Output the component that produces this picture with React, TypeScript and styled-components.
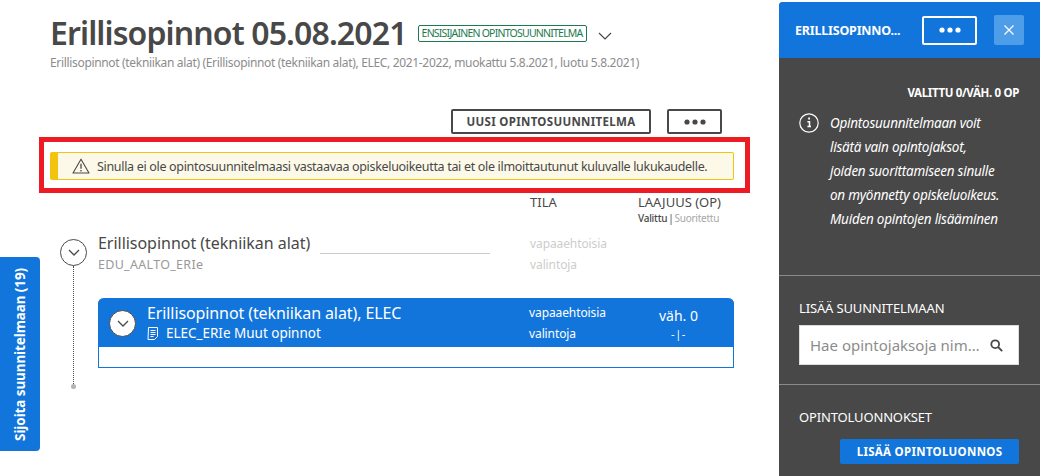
import React from 'react';
import styled, { createGlobalStyle } from 'styled-components';

const Global = createGlobalStyle`
  html, body { margin: 0; padding: 0; background: #fff; }
  body { font-family: "Noto Sans", "Open Sans", sans-serif; color: #484848; }
  * { box-sizing: border-box; }
`;

const Page = styled.div`
  position: relative;
  display: flex;
  width: 1040px;
  height: 476px;
  overflow: hidden;
  background: #fff;
`;

const Main = styled.main`
  width: 779px;
  flex: none;
  display: flex;
  flex-direction: column;
`;

const TitleRow = styled.div`
  display: flex;
  align-items: center;
  height: 36px;
  margin: 15px 0 0 50px;
`;

const Title = styled.h1`
  margin: 0;
  font-size: 32px;
  line-height: 36px;
  font-weight: 600;
  letter-spacing: -0.88px;
  color: #484848;
`;

const Badge = styled.span`
  margin-left: 11px;
  height: 17px;
  padding: 0 3px;
  border: 1px solid #1d7a50;
  border-radius: 2px;
  font-size: 10.5px;
  line-height: 15px;
  letter-spacing: -0.77px;
  color: #1d7a50;
  white-space: nowrap;
`;

const Caret = styled.svg`
  margin: 5px 0 0 11px;
  width: 14px;
  height: 8px;
  stroke: #484848;
  fill: none;
  stroke-width: 1.2;
`;

const Meta = styled.p`
  margin: 3px 0 0 50px;
  height: 17px;
  font-size: 12px;
  line-height: 17px;
  letter-spacing: -0.33px;
  color: #8c8c8c;
  white-space: nowrap;
`;

const Actions = styled.div`
  display: flex;
  justify-content: flex-end;
  gap: 16px;
  margin-top: 38px;
  padding-right: 57px;
`;

const OutlineButton = styled.button<{ $wide?: boolean }>`
  display: flex;
  align-items: center;
  justify-content: center;
  width: ${p => (p.$wide ? '200px' : '55px')};
  height: 25px;
  padding: 0;
  background: #fff;
  border: 2px solid #484848;
  border-radius: 2px;
  font-family: inherit;
  font-size: 11.5px;
  font-weight: 700;
  letter-spacing: 0.32px;
  color: #484848;
`;

const Dots = styled.svg<{ $light?: boolean }>`
  width: 22px;
  height: 6px;
  fill: ${p => (p.$light ? '#fff' : '#484848')};
`;

const Highlight = styled.div`
  margin: 3px 29px 0 39px;
  height: 56px;
  border: 5px solid #ed1c24;
  padding: 10px 11px 0 6px;
`;

const Alert = styled.div`
  display: flex;
  align-items: center;
  height: 28px;
  background: #fdf9e9;
  border: 1px solid #f2c40f;
  border-left-width: 8px;
  border-radius: 2px;
  padding-left: 14px;
  font-size: 12.5px;
  letter-spacing: -0.32px;
  color: #484848;
  white-space: nowrap;
`;

const AlertIcon = styled.svg`
  width: 18px;
  height: 16px;
  margin-right: 7px;
  flex: none;
  stroke: #484848;
  fill: none;
`;

const ColumnHeads = styled.div`
  display: grid;
  grid-template-columns: 108px 90px;
  margin: 0 0 0 530px;
  height: 38px;
`;

const HeadLabel = styled.div`
  font-size: 13px;
  line-height: 18px;
  color: #484848;
  white-space: nowrap;
`;

const HeadSub = styled.div`
  font-size: 10px;
  line-height: 14px;
  letter-spacing: -0.25px;
  color: #a6a6a6;
  white-space: nowrap;
  b { font-weight: 500; color: #484848; }
  i { font-style: normal; color: #484848; margin: 0 1px; }
`;

const Tree = styled.div`
  display: flex;
  margin: 8px 0 0 60px;
`;

const Rail = styled.div`
  width: 27px;
  flex: none;
  display: flex;
  flex-direction: column;
  align-items: center;
`;

const Toggle = styled.div`
  width: 27px;
  height: 27px;
  flex: none;
  display: flex;
  align-items: center;
  justify-content: center;
  border-radius: 50%;
  background: #fff;
  border: 1px solid #484848;
`;

const ToggleIcon = styled.svg`
  width: 12px;
  height: 7px;
  stroke: #484848;
  stroke-width: 1.3;
  fill: none;
`;

const Dotted = styled.div`
  width: 0;
  height: 118px;
  border-left: 1px dotted #484848;
`;

const EndDot = styled.div`
  width: 5px;
  height: 5px;
  border-radius: 50%;
  background: #b3b3b3;
`;

const TreeBody = styled.div`
  margin: -6px 0 0 11px;
  width: 636px;
`;

const RootRow = styled.div`
  display: grid;
  grid-template-columns: 432px 1fr;
  height: 65px;
`;

const RootName = styled.div`
  display: flex;
  align-items: flex-end;
  height: 15px;
  margin-top: 3px;
  font-size: 16px;
  line-height: 15px;
  letter-spacing: -0.03px;
  color: #484848;
  white-space: nowrap;
`;

const Rule = styled.span`
  width: 170px;
  height: 1px;
  margin-left: 10px;
  background: #ccc;
  transform: translateY(3px);
`;

const RootCode = styled.div`
  margin-top: 6px;
  font-size: 12.5px;
  letter-spacing: 0.3px;
  line-height: 16px;
  color: #999;
  white-space: nowrap;
`;

const StateText = styled.div<{ $light?: boolean }>`
  font-size: 12px;
  line-height: 21px;
  letter-spacing: -0.1px;
  color: ${p => (p.$light ? '#fff' : '#cdcdcd')};
`;

const Group = styled.section`
  height: 70px;
  border: 1px solid #1275db;
  border-top: 0;
  border-radius: 6px 6px 0 0;
`;

const GroupHead = styled.div`
  display: grid;
  grid-template-columns: 11px 27px 11px 382px 100px 1fr;
  align-items: center;
  height: 49px;
  margin: 0 -1px;
  background: #1275db;
  border-radius: 6px 6px 0 0;
  color: #fff;
  padding-top: 1px;
`;

const GroupToggle = styled(Toggle)`
  grid-column: 2;
`;

const GroupText = styled.div`
  grid-column: 4;
  white-space: nowrap;
`;

const GroupTitle = styled.div`
  font-size: 16px;
  line-height: 20px;
  letter-spacing: -0.1px;
`;

const GroupSub = styled.div`
  display: flex;
  align-items: center;
  gap: 7px;
  font-size: 13.5px;
  line-height: 20px;
  letter-spacing: -0.02px;
`;

const DocIcon = styled.svg`
  width: 12px;
  height: 13px;
  stroke: #fff;
  fill: none;
`;

const Scope = styled.div`
  text-align: center;
  transform: translateX(-3px);
`;

const ScopeMain = styled.div`
  font-size: 14px;
  line-height: 20px;
`;

const ScopeSub = styled.div`
  font-size: 11px;
  line-height: 15px;
  letter-spacing: 0.6px;
`;

const SideTab = styled.button`
  position: absolute;
  left: 0;
  top: 257px;
  width: 40px;
  height: 194px;
  padding: 0;
  display: flex;
  align-items: center;
  justify-content: center;
  border: 0;
  border-radius: 0 4px 4px 0;
  background: #1275db;
  color: #fff;
  font-family: inherit;
`;

const SideTabLabel = styled.span`
  writing-mode: vertical-rl;
  transform: rotate(180deg);
  font-size: 13.5px;
  font-weight: 700;
  letter-spacing: -0.1px;
  white-space: nowrap;
`;

const Panel = styled.aside`
  width: 261px;
  flex: none;
  margin-top: 2px;
  display: flex;
  flex-direction: column;
  background: #484848;
  color: #fff;
  border-radius: 4px 0 0 0;
  overflow: hidden;
`;

const PanelHead = styled.header`
  display: flex;
  align-items: center;
  height: 56px;
  flex: none;
  background: #1275db;
  padding: 0 16px 0 16px;
`;

const PanelTitle = styled.div`
  width: 127px;
  font-size: 12.5px;
  font-weight: 700;
  letter-spacing: -0.2px;
  white-space: nowrap;
`;

const PanelDots = styled.button`
  display: flex;
  align-items: center;
  justify-content: center;
  width: 55px;
  height: 29px;
  padding: 0;
  background: transparent;
  border: 2px solid #fff;
  border-radius: 2px;
`;

const CloseButton = styled.button`
  display: flex;
  align-items: center;
  justify-content: center;
  width: 30px;
  height: 30px;
  margin-left: 17px;
  padding: 0;
  background: #4d9de9;
  border: 0;
  border-radius: 2px;
`;

const CloseIcon = styled.svg`
  width: 10px;
  height: 10px;
  stroke: #fff;
  stroke-width: 1.2;
`;

const InfoSection = styled.div`
  height: 218px;
  flex: none;
  padding: 27px 21px 0 20px;
  overflow: hidden;
  border-bottom: 1px solid #8a8a8a;
`;

const Selected = styled.div`
  text-align: right;
  font-size: 11.5px;
  line-height: 16px;
  font-weight: 700;
  letter-spacing: -0.35px;
`;

const InfoRow = styled.div`
  display: flex;
  margin-top: 10px;
`;

const InfoIcon = styled.svg`
  width: 20px;
  height: 20px;
  flex: none;
  margin: 2px 11px 0 0;
  stroke: #fff;
  fill: none;
`;

const InfoText = styled.p`
  margin: 0;
  font-size: 13.5px;
  line-height: 24px;
  font-style: italic;
  white-space: nowrap;
  letter-spacing: -0.25px;
`;

const PanelSection = styled.section<{ $h: number; $line?: boolean }>`
  height: ${p => p.$h}px;
  flex: none;
  padding: 23px 21px 0 20px;
  border-bottom: ${p => (p.$line ? '1px solid #8a8a8a' : '0')};
`;

const SectionTitle = styled.h2`
  margin: 0;
  font-size: 13px;
  line-height: 18px;
  font-weight: 400;
  letter-spacing: -0.15px;
`;

const SearchBox = styled.div`
  display: flex;
  align-items: center;
  height: 40px;
  margin-top: 8px;
  background: #fff;
  border: 1px solid #ddd;
  padding: 0 15px 0 10px;
`;

const SearchInput = styled.input`
  flex: 1;
  min-width: 0;
  border: 0;
  outline: 0;
  padding: 0;
  font-family: inherit;
  font-size: 15px;
  color: #484848;
  text-overflow: ellipsis;
  &::placeholder { color: #8c8c8c; opacity: 1; }
`;

const SearchIcon = styled.svg`
  width: 13px;
  height: 13px;
  flex: none;
  margin-left: 8px;
  stroke: #484848;
  stroke-width: 1.8;
  fill: none;
`;

const DraftButton = styled.button`
  display: block;
  width: 179px;
  height: 25px;
  margin: 13px 0 0 auto;
  padding: 0;
  background: #1275db;
  border: 0;
  border-radius: 2px;
  color: #fff;
  font-family: inherit;
  font-size: 11.5px;
  font-weight: 700;
  letter-spacing: 0.3px;
`;

const Chevron = () => (
  <ToggleIcon viewBox="0 0 12 7"><path d="M1 1l5 5 5-5" /></ToggleIcon>
);

const ThreeDots = ({ light }: { light?: boolean }) => (
  <Dots $light={light} viewBox="0 0 22 6">
    <circle cx="3" cy="3" r="2.6" />
    <circle cx="11" cy="3" r="2.6" />
    <circle cx="19" cy="3" r="2.6" />
  </Dots>
);

export default function App() {
  return (
    <>
      <Global />
      <Page>
        <Main>
          <TitleRow>
            <Title>Erillisopinnot 05.08.2021</Title>
            <Badge>ENSISIJAINEN OPINTOSUUNNITELMA</Badge>
            <Caret viewBox="0 0 14 8"><path d="M1 1l6 6 6-6" /></Caret>
          </TitleRow>
          <Meta>Erillisopinnot (tekniikan alat) (Erillisopinnot (tekniikan alat), ELEC, 2021-2022, muokattu 5.8.2021, luotu 5.8.2021)</Meta>
          <Actions>
            <OutlineButton $wide>UUSI OPINTOSUUNNITELMA</OutlineButton>
            <OutlineButton aria-label="Lisää"><ThreeDots /></OutlineButton>
          </Actions>
          <Highlight>
            <Alert>
              <AlertIcon viewBox="0 0 18 16">
                <path d="M9 1.2 17 15H1z" strokeWidth="1.1" strokeLinejoin="round" />
                <path d="M9 5.8v5M9 12v1.4" strokeWidth="1.3" />
              </AlertIcon>
              Sinulla ei ole opintosuunnitelmaasi vastaavaa opiskeluoikeutta tai et ole ilmoittautunut kuluvalle lukukaudelle.
            </Alert>
          </Highlight>
          <ColumnHeads>
            <HeadLabel>TILA</HeadLabel>
            <div>
              <HeadLabel>LAAJUUS (OP)</HeadLabel>
              <HeadSub><b>Valittu</b><i>|</i>Suoritettu</HeadSub>
            </div>
          </ColumnHeads>
          <Tree>
            <Rail>
              <Toggle><Chevron /></Toggle>
              <Dotted />
              <EndDot />
            </Rail>
            <TreeBody>
              <RootRow>
                <div>
                  <RootName>Erillisopinnot (tekniikan alat)<Rule /></RootName>
                  <RootCode>EDU_AALTO_ERIe</RootCode>
                </div>
                <StateText>vapaaehtoisia<br />valintoja</StateText>
              </RootRow>
              <Group>
                <GroupHead>
                  <GroupToggle><Chevron /></GroupToggle>
                  <GroupText>
                    <GroupTitle>Erillisopinnot (tekniikan alat), ELEC</GroupTitle>
                    <GroupSub>
                      <DocIcon viewBox="0 0 12 13">
                        <path d="M1.5.5h9v9l-3 3h-6.5zM3.5 3.5h5M3.5 5.5h5M3.5 7.5h5M3.5 9.5h3" strokeWidth="1" />
                      </DocIcon>
                      ELEC_ERIe Muut opinnot
                    </GroupSub>
                  </GroupText>
                  <StateText $light>vapaaehtoisia<br />valintoja</StateText>
                  <Scope>
                    <ScopeMain>väh. 0</ScopeMain>
                    <ScopeSub>-|-</ScopeSub>
                  </Scope>
                </GroupHead>
              </Group>
            </TreeBody>
          </Tree>
        </Main>
        <Panel>
          <PanelHead>
            <PanelTitle>ERILLISOPINNO...</PanelTitle>
            <PanelDots aria-label="Lisää"><ThreeDots light /></PanelDots>
            <CloseButton aria-label="Sulje">
              <CloseIcon viewBox="0 0 10 10"><path d="M.5.5l9 9M9.5.5l-9 9" /></CloseIcon>
            </CloseButton>
          </PanelHead>
          <InfoSection>
            <Selected>VALITTU 0/VÄH. 0 OP</Selected>
            <InfoRow>
              <InfoIcon viewBox="0 0 20 20">
                <circle cx="10" cy="10" r="9.2" strokeWidth="1.2" />
                <path d="M8.4 8.7h2.1v4.6M8.4 13.6h3.6" strokeWidth="1.5" />
                <path d="M9.2 5.5h1.8" strokeWidth="2" />
              </InfoIcon>
              <InfoText>
                Opintosuunnitelmaan voit<br />
                lisätä vain opintojaksot,<br />
                joiden suorittamiseen sinulle<br />
                on myönnetty opiskeluoikeus.<br />
                Muiden opintojen lisääminen
              </InfoText>
            </InfoRow>
          </InfoSection>
          <PanelSection $h={109} $line>
            <SectionTitle>LISÄÄ SUUNNITELMAAN</SectionTitle>
            <SearchBox>
              <SearchInput placeholder="Hae opintojaksoja nimellä" />
              <SearchIcon viewBox="0 0 13 13"><circle cx="5.2" cy="5.2" r="3.9" /><path d="M8 8l4.2 4.2" /></SearchIcon>
            </SearchBox>
          </PanelSection>
          <PanelSection $h={92}>
            <SectionTitle>OPINTOLUONNOKSET</SectionTitle>
            <DraftButton>LISÄÄ OPINTOLUONNOS</DraftButton>
          </PanelSection>
        </Panel>
        <SideTab><SideTabLabel>Sijoita suunnitelmaan (19)</SideTabLabel></SideTab>
      </Page>
    </>
  );
}
